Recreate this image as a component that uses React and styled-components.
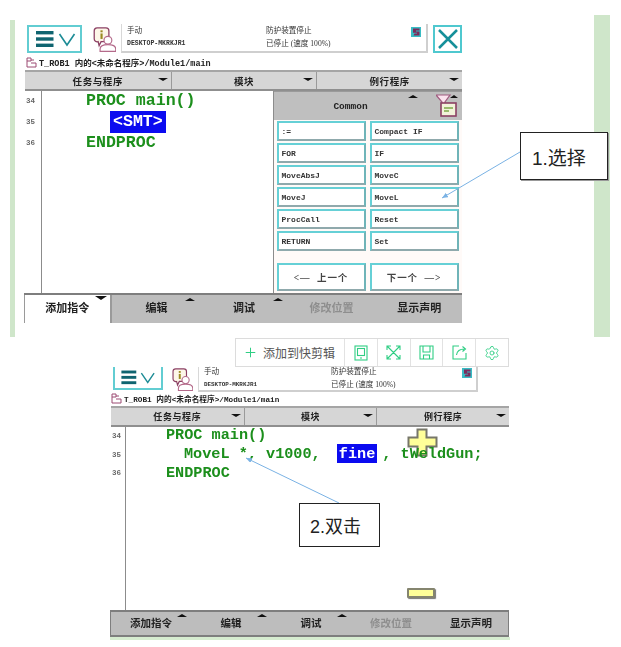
import React from "react";
import styled, { createGlobalStyle } from "styled-components";
import { Settings, Plus } from "lucide-react";

const Global = createGlobalStyle`
  html, body { margin: 0; padding: 0; background: #fff; }
  * { box-sizing: border-box; }
`;

const CJK = `"Liberation Serif", "Noto Sans CJK SC", serif`;
const MONO = `"Liberation Mono", "Noto Sans CJK SC", monospace`;

const Page = styled.div`
  position: relative;
  width: 621px;
  height: 647px;
  overflow: hidden;
  font-family: "Noto Sans CJK SC", sans-serif;
`;
const TopRow = styled.section`
  display: flex;
  align-items: flex-start;
  height: 337px;
  padding-left: 10px;
`;
const LeftStrip = styled.div`
  width: 5px;
  height: 317px;
  margin-top: 20px;
  background: #cfe6ca;
`;
const RightStrip = styled.div`
  width: 16px;
  height: 322px;
  margin-top: 15px;
  margin-left: auto;
  margin-right: 11px;
  background: #cfe6ca;
`;
const Screen = styled.div`
  display: flex;
  flex-direction: column;
  flex: none;
  width: ${p => p.$w}px;
  height: ${p => p.$h}px;
  margin-left: ${p => p.$ml}px;
  margin-top: ${p => p.$mt || 0}px;
  background: #fff;
  filter: blur(0.45px);
`;
const Header = styled.header`
  display: flex;
  align-items: flex-start;
  height: ${p => p.$h}px;
  flex: none;
`;
const MenuButton = styled.div`
  display: flex;
  align-items: center;
  justify-content: center;
  gap: 5px;
  flex: none;
  width: ${p => p.$w}px;
  height: ${p => p.$h}px;
  margin-left: ${p => p.$ml}px;
  margin-top: ${p => p.$mt}px;
  border: 2px solid #62cdd2;
  background: #fff;
  ${p => p.$cut && "border-top: none;"}
`;
const UserIcon = styled.svg`
  flex: none;
  margin-left: ${p => p.$ml}px;
  margin-top: ${p => p.$mt}px;
`;
const StatusBox = styled.div`
  position: relative;
  display: grid;
  grid-template-columns: ${p => p.$col}px 1fr;
  align-content: space-between;
  flex: none;
  width: ${p => p.$w}px;
  height: ${p => p.$h}px;
  margin-left: ${p => p.$ml}px;
  padding: ${p => p.$pad};
  background: #fff;
  border-left: 1px solid #d8d8d8;
  border-right: 2px solid #cfcfcf;
  border-bottom: 2px solid #cfcfcf;
  color: #333;
`;
const StatusText = styled.span`
  font-weight: ${p => (p.$mono ? 700 : 400)};
  font-family: ${p => (p.$mono ? MONO : CJK)};
  font-size: ${p => (p.$mono ? `${p.$fs}px` : "7.6px")};
  line-height: 9px;
  white-space: nowrap;
`;
const Flag = styled.svg`
  position: absolute;
  top: ${p => p.$t}px;
  right: ${p => p.$r}px;
`;
const CloseButton = styled.div`
  display: flex;
  align-items: center;
  justify-content: center;
  flex: none;
  width: 29px;
  height: 28px;
  margin-left: 5px;
  margin-top: 1px;
  border: 2px solid #4fc8cf;
`;
const PathLine = styled.div`
  display: flex;
  align-items: center;
  gap: 2px;
  flex: none;
  height: ${p => p.$h}px;
  padding-left: ${p => p.$pl}px;
  font-family: ${MONO};
  font-size: ${p => p.$fs}px;
  font-weight: 700;
  color: #222;
  white-space: nowrap;
`;
const TabBar = styled.div`
  display: grid;
  grid-template-columns: 1fr 1fr 1fr;
  flex: none;
  height: ${p => p.$h}px;
  border-top: 2px solid #a5a5a5;
  border-bottom: 2px solid #8f8f8f;
  background: #d6d6d6;
  margin-left: 1px;
`;
const TabCell = styled.div`
  position: relative;
  display: flex;
  align-items: center;
  justify-content: center;
  font-family: ${CJK};
  font-size: ${p => p.$fs}px;
  font-weight: 700;
  color: #222;
  letter-spacing: 0.6px;
  & + & { border-left: 1px solid #9a9a9a; }
`;
const Caret = styled.i`
  position: absolute;
  right: ${p => p.$r}px;
  top: ${p => p.$t}px;
  width: 0;
  height: 0;
  border-left: ${p => p.$size}px solid transparent;
  border-right: ${p => p.$size}px solid transparent;
  ${p => (p.$up ? "border-bottom" : "border-top")}: ${p => p.$size * 0.75}px solid #111;
`;
const Body = styled.div`
  display: flex;
  flex: 1;
  min-height: 0;
  margin-left: 1px;
`;
const Gutter = styled.div`
  flex: none;
  width: ${p => p.$w}px;
  border-right: 1.5px solid #8c8c8c;
`;
const LineNo = styled.div`
  height: ${p => p.$h}px;
  line-height: ${p => p.$h}px;
  padding-left: 1px;
  font-family: ${MONO};
  font-size: 7.5px;
  font-weight: 700;
  color: #666;
`;
const Code = styled.div`
  position: relative;
  flex: 1;
  margin-top: ${p => p.$mt}px;
`;
const CodeLine = styled.div`
  position: relative;
  display: flex;
  align-items: center;
  height: ${p => p.$h}px;
  padding-left: ${p => p.$indent}px;
  font-family: ${MONO};
  font-weight: 700;
  font-size: ${p => p.$fs}px;
  color: #1c8f1c;
  white-space: pre;
`;
const Selected = styled.span`
  display: inline-flex;
  align-items: center;
  height: ${p => p.$h}px;
  padding: 0 ${p => p.$px}px;
  margin: ${p => p.$m || 0};
  background: #0b0bf0;
  color: #fff;
`;
const Picker = styled.aside`
  display: flex;
  flex-direction: column;
  flex: none;
  width: 189px;
  border-left: 1.5px solid #8c8c8c;
  background: #fffaf8;
`;
const PickerHead = styled.div`
  position: relative;
  display: flex;
  align-items: center;
  justify-content: center;
  flex: none;
  height: 29px;
  padding-right: 35px;
  background: #bfbfbf;
  border-top: 1px solid #9a9a9a;
  font-family: "Liberation Mono", monospace;
  font-size: 9.5px;
  font-weight: 700;
  color: #222;
`;
const FilterIcon = styled.svg`
  position: absolute;
  right: 4px;
  top: 2px;
`;
const PickerGrid = styled.div`
  display: grid;
  grid-template-columns: 89px 89px;
  grid-auto-rows: 20px;
  gap: 2px 4px;
  padding: 1px 0 0 2.5px;
`;
const Instr = styled.div`
  display: flex;
  align-items: center;
  padding-left: 3px;
  background: #fff;
  border: 2px solid #66d0d6;
  border-right-color: #6fb4b8;
  border-bottom-color: #8fa9ac;
  font-family: ${MONO};
  font-size: 8px;
  font-weight: 700;
  color: #333;
`;
const NavRow = styled.div`
  display: grid;
  grid-template-columns: 89px 89px;
  gap: 4px;
  padding: 12px 0 0 2.5px;
`;
const NavButton = styled(Instr)`
  justify-content: center;
  height: 28px;
  padding-left: 0;
  font-family: ${CJK};
  font-size: 9.5px;
  letter-spacing: 0.9px;
  color: #444;
  white-space: pre;
`;
const BottomBar = styled.div`
  display: grid;
  grid-template-columns: ${p => p.$cols};
  flex: none;
  height: ${p => p.$h}px;
  background: #bdbdbd;
  border-top: 2px solid #7e7e7e;
  ${p => p.$framed && "border-bottom: 2px solid #7e7e7e; border-left: 1px solid #7e7e7e; border-right: 1px solid #7e7e7e;"}
`;
const BottomTab = styled.div`
  position: relative;
  display: flex;
  align-items: center;
  justify-content: center;
  font-family: ${CJK};
  font-size: ${p => p.$fs}px;
  font-weight: 700;
  padding-bottom: ${p => p.$pb}px;
  padding-left: ${p => p.$pl || 0}px;
  color: ${p => (p.$off ? "#8e8e8e" : "#222")};
  background: ${p => (p.$active ? "#fff" : "transparent")};
  ${p => p.$active && "border-left: 1px solid #9a9a9a; border-right: 2px solid #9a9a9a;"}
`;
const ToolbarRow = styled.div`
  display: flex;
  width: 274px;
  height: 29px;
  margin: 1px 0 0 235px;
  border: 1px solid #dcdcdc;
  background: #fff;
`;
const AddClip = styled.div`
  display: flex;
  align-items: center;
  gap: 5px;
  flex: none;
  width: 108px;
  padding-left: 7px;
  font-size: 12px;
  color: #555;
  white-space: nowrap;
`;
const ToolIcon = styled.div`
  display: flex;
  align-items: center;
  justify-content: center;
  flex: 1;
  border-left: 1px solid #e2e2e2;
  color: #2fce84;
`;
const GreenLine = styled.div`
  width: 400px;
  height: 3px;
  margin-left: 110px;
  background: #d6ecd0;
`;
const Callout = styled.div`
  position: absolute;
  left: ${p => p.$x}px;
  top: ${p => p.$y}px;
  width: ${p => p.$w}px;
  height: ${p => p.$h}px;
  padding-left: ${p => p.$pl}px;
  display: flex;
  align-items: center;
  background: #fff;
  border: 1px solid #222;
  font-family: "Liberation Sans", "Noto Sans CJK SC", sans-serif;
  font-size: ${p => p.$fs}px;
  color: #222;
  ${p => p.$shadow && "box-shadow: 1px 1px 0 #999;"}
`;
const Overlay = styled.svg`
  position: absolute;
  left: 0;
  top: 0;
  pointer-events: none;
`;
const PlusCursor = styled.svg`
  position: absolute;
  left: 281px;
  top: 3px;
`;
const MinusCursor = styled.div`
  position: absolute;
  left: 407px;
  top: 588px;
  width: 28px;
  height: 10px;
  background: #ffff99;
  border: 2px solid #85856f;
  border-radius: 1px;
  box-shadow: 1px 1px 1px #777;
`;

const MenuGlyph = ({ s = 1 }) => (
  <svg width={46 * s} height={22 * s} viewBox="0 0 46 22">
    <g fill="#0f6470">
      <rect x="4" y="3" width="17.500" height="3.4" />
      <rect x="4" y="9.3" width="17.500" height="3.4" />
      <rect x="4" y="15.6" width="17.500" height="3.4" />
    </g>
    <path d="M27.500 6 L35 17 L42.500 6" fill="none" stroke="#1d8c96" strokeWidth="1.6" />
  </svg>
);

const User = ({ size, ml, mt }) => (
  <UserIcon $ml={ml} $mt={mt} width={size} height={size * 1.06} viewBox="0 0 24 26">
    <path d="M5 1h9a3 3 0 0 1 3 3v8a3 3 0 0 1-3 3H9l-2 4-1-4a3 3 0 0 1-4-3V4a3 3 0 0 1 3-3z" fill="#fdf6e8" stroke="#8b3f63" strokeWidth="1.3" />
    <rect x="8.4" y="3.4" width="2.2" height="2" fill="#9a8a20" />
    <rect x="8.4" y="6.6" width="2.2" height="5.6" fill="#9a8a20" />
    <circle cx="16" cy="13.5" r="4" fill="#fff" stroke="#b46a8a" strokeWidth="1.2" />
    <path d="M8 25v-2.5c0-3 3-4.5 8-4.5s8 1.500 8 4.500V25z" fill="#fff" stroke="#b46a8a" strokeWidth="1.2" />
  </UserIcon>
);

const FlagIcon = ({ t, r }) => (
  <Flag $t={t} $r={r} width="10" height="10" viewBox="0 0 10 10">
    <rect width="10" height="10" fill="#39bcc4" />
    <path d="M2 1.500h6.500v2H5v1h3.500v4H2.500l1-2H6v-.8H2z" fill="#7c2b5c" />
  </Flag>
);

const PathIcon = () => (
  <svg width="11" height="11" viewBox="0 0 11 11">
    <path d="M1 1h4v3H1zM1 4v6h9V6H5" fill="none" stroke="#9c4a72" strokeWidth="1" />
    <path d="M5 3h3" stroke="#9c4a72" strokeWidth="1" />
  </svg>
);

const Triple = ({ items, h, fs }) => (
  <TabBar $h={h}>
    {items.map(t => (
      <TabCell key={t} $fs={fs}>
        {t}
        <Caret $r={3} $t={6} $size={5} />
      </TabCell>
    ))}
  </TabBar>
);

const INSTR = [":=", "Compact IF", "FOR", "IF", "MoveAbsJ", "MoveC", "MoveJ", "MoveL", "ProcCall", "Reset", "RETURN", "Set"];
const TASKS = ["任务与程序", "模块", "例行程序"];
const BOTTOM = ["添加指令", "编辑", "调试", "修改位置", "显示声明"];

export default function App() {
  return (
    <Page>
      <Global />
      <TopRow>
        <LeftStrip />
        <Screen $w={438} $h={299} $ml={9} $mt={24}>
          <Header $h={30}>
            <MenuButton $w={55} $h={28} $ml={3} $mt={1}><MenuGlyph /></MenuButton>
            <User size={24} ml={10} mt={3} />
            <StatusBox $w={307} $h={29} $ml={5} $col={139} $pad="2px 4px 3px 5px">
              <StatusText>手动</StatusText>
              <StatusText>防护装置停止</StatusText>
              <StatusText $mono $fs={6.5}>DESKTOP-MKRKJR1</StatusText>
              <StatusText>已停止 (速度 100%)</StatusText>
              <FlagIcon t={3} r={5} />
            </StatusBox>
            <CloseButton>
              <svg width="22" height="22" viewBox="0 0 22 22">
                <path d="M2 2L20 20M20 2L2 20" stroke="#16909a" strokeWidth="2.5" />
              </svg>
            </CloseButton>
          </Header>
          <PathLine $h={16} $pl={2} $fs={8.5}><PathIcon />T_ROB1 内的&lt;未命名程序&gt;/Module1/main</PathLine>
          <Triple items={TASKS} h={21} fs={9.5} />
          <Body>
            <Gutter $w={17}>
              {[34, 35, 36].map(n => <LineNo key={n} $h={21}>{n}</LineNo>)}
            </Gutter>
            <Code $mt={-1}>
              <CodeLine $h={21} $fs={16.6} $indent={44}>PROC main()</CodeLine>
              <CodeLine $h={21} $fs={16.6} $indent={68}><Selected $h={22} $px={3}>&lt;SMT&gt;</Selected></CodeLine>
              <CodeLine $h={21} $fs={16.6} $indent={44}>ENDPROC</CodeLine>
            </Code>
            <Picker>
              <PickerHead>
                Common
                <Caret $up $r={44} $t={3} $size={5} />
                <FilterIcon width="22" height="23" viewBox="0 0 22 23">
                  <path d="M0 1h14l-5 7v7l-3-2V8z" fill="#fbe3ee" stroke="#a05c80" strokeWidth="1.2" />
                  <rect x="5" y="9" width="15" height="13" fill="#f2f2da" stroke="#8b3f63" strokeWidth="1.600" />
                  <path d="M8 14h9M8 17h5" stroke="#7da84a" strokeWidth="1.500" />
                  <path d="M14 4l4-3 4 3z" fill="#111" />
                </FilterIcon>
              </PickerHead>
              <PickerGrid>
                {INSTR.map(t => <Instr key={t}>{t}</Instr>)}
              </PickerGrid>
              <NavRow>
                <NavButton>{"<—  上一个"}</NavButton>
                <NavButton>{"下一个  —>"}</NavButton>
              </NavRow>
            </Picker>
          </Body>
          <BottomBar $h={30} $cols="repeat(5, 1fr)">
            {BOTTOM.map((t, i) => (
              <BottomTab key={t} $active={i === 0} $off={i === 3} $fs={11} $pb={4} $pl={i === 0 ? 0 : 2}>
                {t}
                {i === 0 && <Caret $r={3} $t={1} $size={6} />}
                {(i === 1 || i === 2) && <Caret $up $r={4} $t={3} $size={5} />}
              </BottomTab>
            ))}
          </BottomBar>
        </Screen>
        <RightStrip />
      </TopRow>

      <ToolbarRow>
        <AddClip><Plus size={15} color="#2fce84" strokeWidth={1.6} />添加到快剪辑</AddClip>
        <ToolIcon>
          <svg width="14" height="16" viewBox="0 0 14 16" fill="none" stroke="currentColor" strokeWidth="1.100">
            <rect x="1" y="1" width="12" height="14" /><rect x="3.500" y="3.500" width="7" height="7" /><path d="M6 13h2" />
          </svg>
        </ToolIcon>
        <ToolIcon>
          <svg width="15" height="15" viewBox="0 0 15 15" fill="none" stroke="currentColor" strokeWidth="1.100">
            <path d="M1.500 1.500L13.500 13.500M13.500 1.500L1.500 13.500M1 5V1h4M10 1h4v4M14 10v4h-4M5 14H1v-4" />
          </svg>
        </ToolIcon>
        <ToolIcon>
          <svg width="15" height="15" viewBox="0 0 15 15" fill="none" stroke="currentColor" strokeWidth="1.100">
            <path d="M1 1h13v13H1zM4 1v6h7V1M4.500 14v-4h6v4" />
          </svg>
        </ToolIcon>
        <ToolIcon>
          <svg width="15" height="15" viewBox="0 0 15 15" fill="none" stroke="currentColor" strokeWidth="1.100">
            <path d="M7 1H1v13h13V8M4.500 10c.5-4 3-6 8-6M10.500 1.500L13.500 4l-3 2.500" />
          </svg>
        </ToolIcon>
        <ToolIcon><Settings size={16} strokeWidth={1.3} /></ToolIcon>
      </ToolbarRow>

      <Screen $w={399} $h={270} $ml={110}>
        <Header $h={24}>
          <MenuButton $cut $w={50} $h={23} $ml={3} $mt={0}><MenuGlyph s={0.85} /></MenuButton>
          <User size={22} ml={8} mt={1} />
          <StatusBox $w={280} $h={25} $ml={5} $col={127} $pad="0 4px 1px 5px">
            <StatusText>手动</StatusText>
            <StatusText>防护装置停止</StatusText>
            <StatusText $mono $fs={5.9}>DESKTOP-MKRKJR1</StatusText>
            <StatusText>已停止 (速度 100%)</StatusText>
            <FlagIcon t={1} r={4} />
          </StatusBox>
        </Header>
        <PathLine $h={15} $pl={1} $fs={7.7}><PathIcon />T_ROB1 内的&lt;未命名程序&gt;/Module1/main</PathLine>
        <Triple items={TASKS} h={21} fs={9} />
        <Body>
          <Gutter $w={15}>
            {[34, 35, 36].map(n => <LineNo key={n} $h={18.5}>{n}</LineNo>)}
          </Gutter>
          <Code $mt={-2}>
            <PlusCursor width="31" height="29" viewBox="0 0 31 29">
              <path d="M10.500 1.500h9v8h10v9h-10v9h-9v-9h-9v-9h9z" fill="#ffff99" stroke="#77776a" strokeWidth="2" />
            </PlusCursor>
            <CodeLine $h={19} $fs={15.2} $indent={40}>PROC main()</CodeLine>
            <CodeLine $h={19} $fs={15.2} $indent={58}>
              MoveL *, v1000, <Selected $h={19} $px={2} $m="0 5px 0 7px">fine</Selected>, tWeldGun;
            </CodeLine>
            <CodeLine $h={19} $fs={15.2} $indent={40}>ENDPROC</CodeLine>
          </Code>
        </Body>
        <BottomBar $h={27} $framed $cols="repeat(5, 80px)">
          {BOTTOM.map((t, i) => (
            <BottomTab key={t} $off={i === 3} $fs={10.5} $pb={3}>
              {t}
              {i < 3 && <Caret $up $r={4} $t={2} $size={5} />}
            </BottomTab>
          ))}
        </BottomBar>
      </Screen>
      <GreenLine />

      <Overlay width="621" height="647">
        <defs>
          <marker id="ah" markerWidth="7" markerHeight="6" refX="6" refY="2.5" orient="auto">
            <path d="M0 0L6 2.5L0 5z" fill="#7ab2e4" />
          </marker>
        </defs>
        <line x1="520" y1="152" x2="442" y2="198" stroke="#7ab2e4" strokeWidth="1" markerEnd="url(#ah)" />
        <line x1="339" y1="503" x2="246" y2="458" stroke="#7ab2e4" strokeWidth="1" markerEnd="url(#ah)" />
      </Overlay>
      <Callout $x={520} $y={132} $w={88} $h={48} $pl={11} $fs={19} $shadow>1.选择</Callout>
      <Callout $x={299} $y={503} $w={81} $h={44} $pl={10} $fs={18}>2.双击</Callout>
      <MinusCursor />
    </Page>
  );
}
